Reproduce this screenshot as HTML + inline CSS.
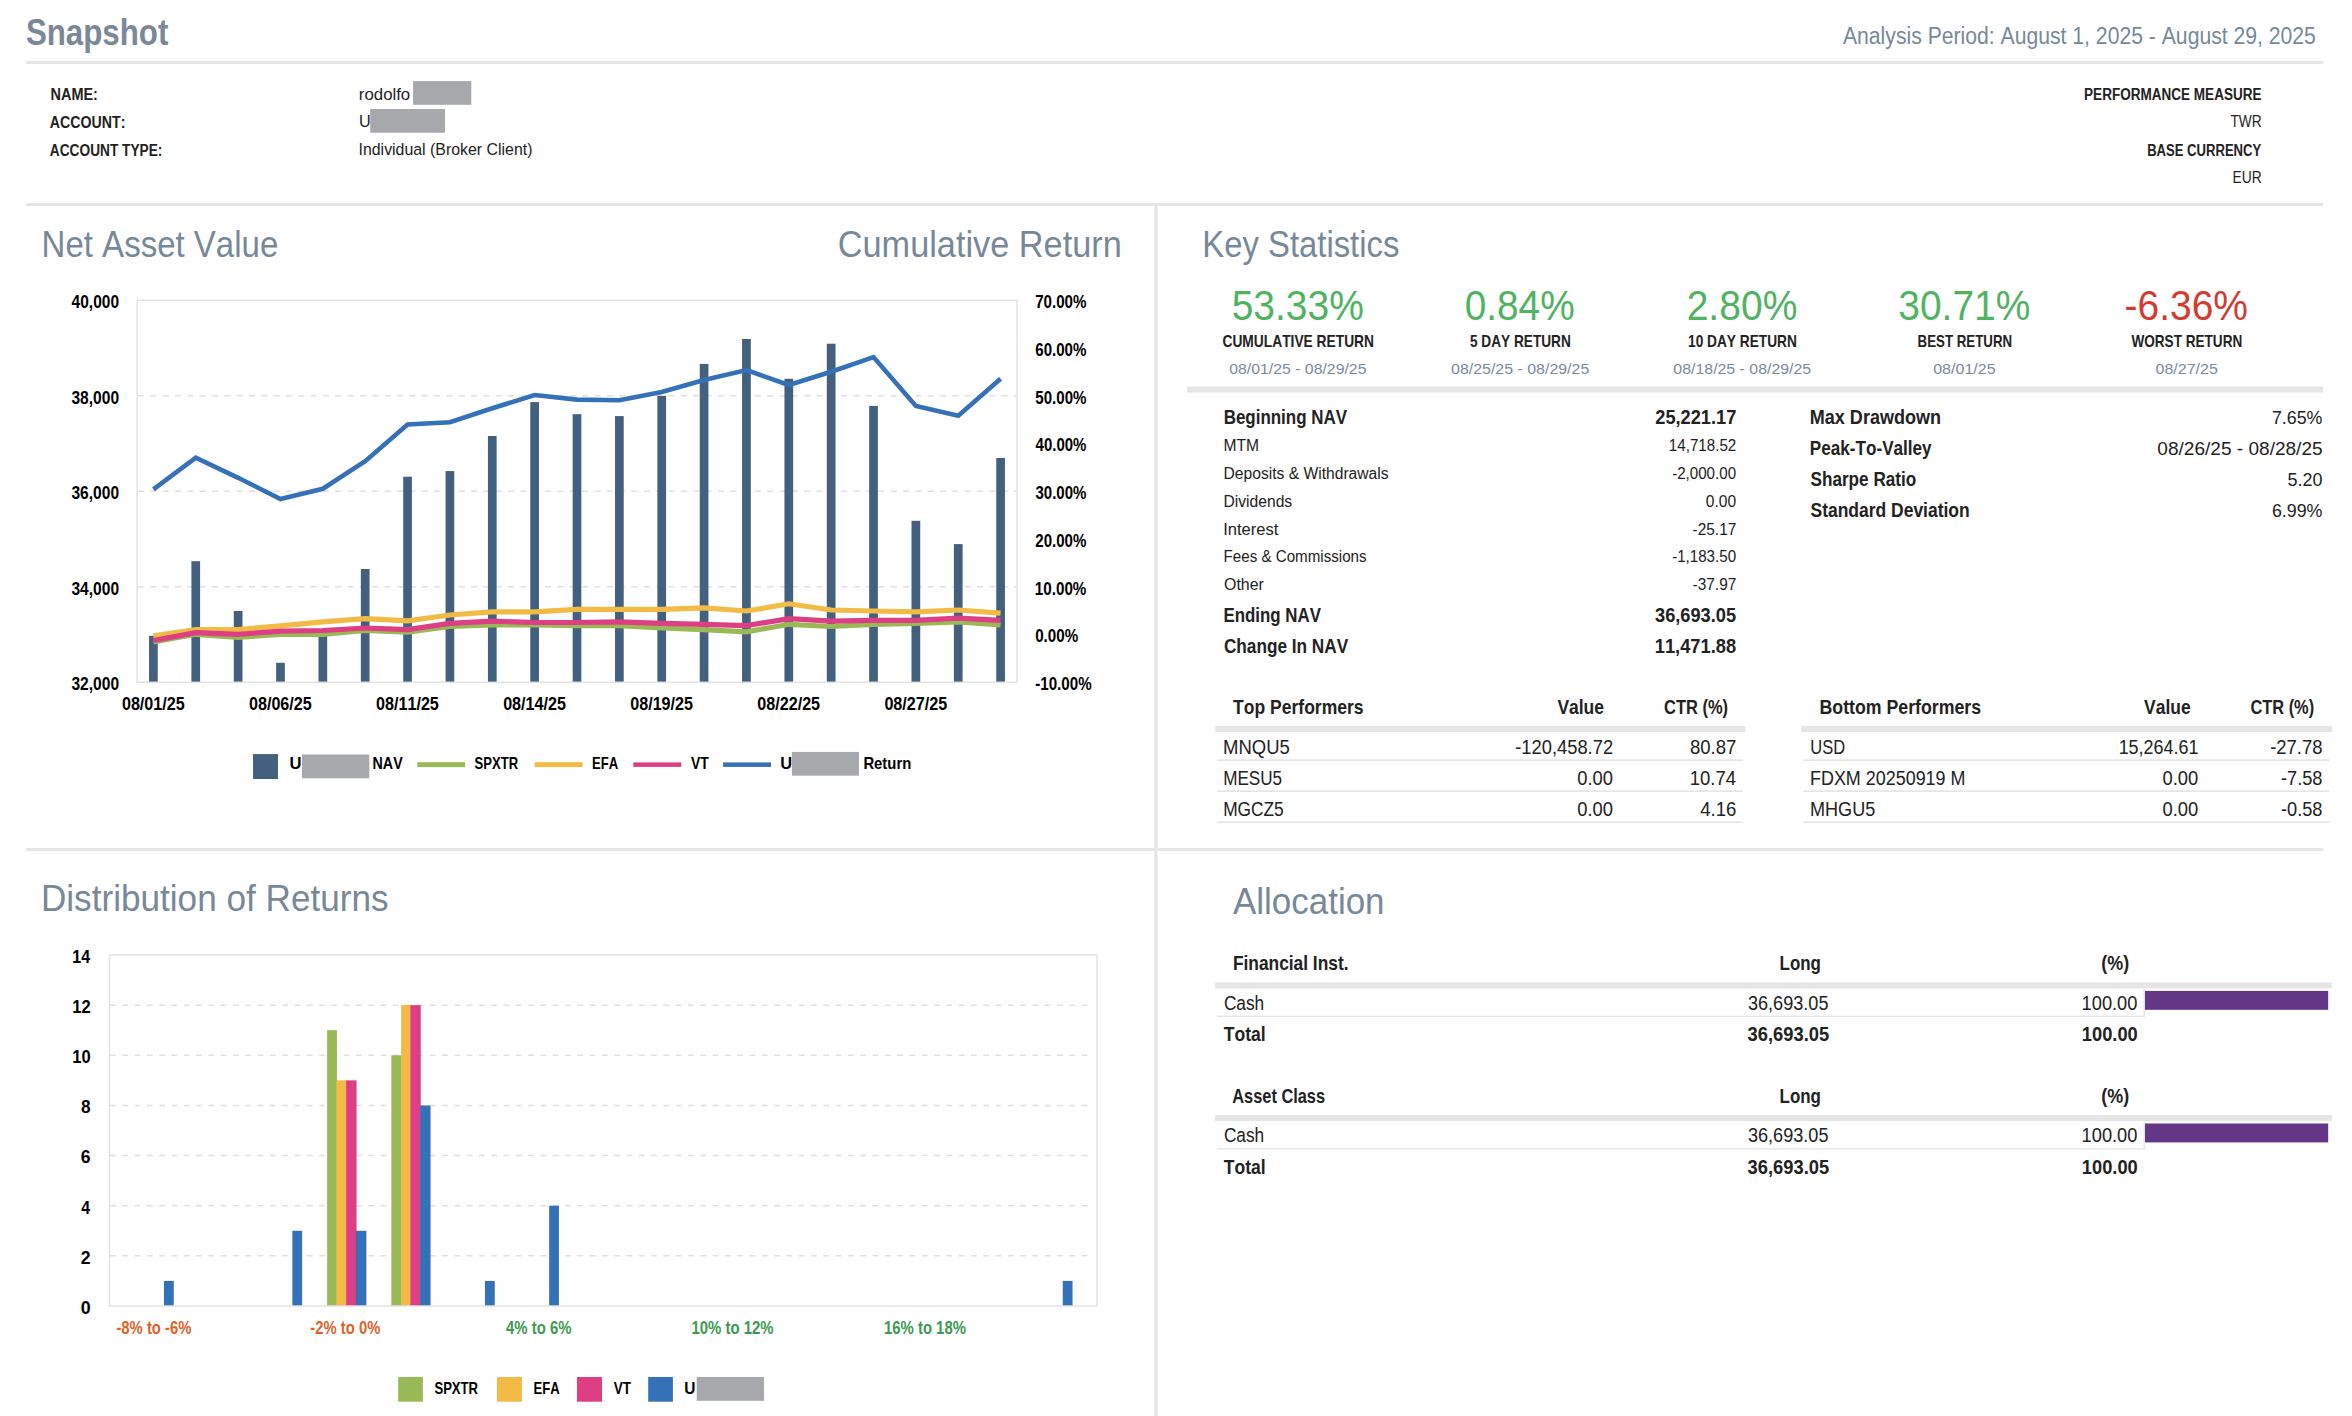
<!DOCTYPE html>
<html><head><meta charset="utf-8"><title>Snapshot</title>
<style>
html,body{margin:0;padding:0;background:#fff;width:2352px;height:1416px;overflow:hidden}
svg{display:block;font-family:"Liberation Sans",sans-serif;font-kerning:none;font-variant-ligatures:none}
</style></head><body>
<svg width="2352" height="1416" viewBox="0 0 2352 1416">
<rect x="0" y="0" width="2352" height="1416" fill="#ffffff"/>
<text x="25.90" y="44.60" font-size="37.00" font-weight="700" fill="#7a8899" textLength="142.48" lengthAdjust="spacingAndGlyphs">Snapshot</text>
<text x="1842.96" y="43.80" font-size="23.00" fill="#778899" textLength="472.93" lengthAdjust="spacingAndGlyphs">Analysis Period: August 1, 2025 - August 29, 2025</text>
<rect x="26.00" y="61.00" width="2297.00" height="3.00" fill="#e5e5e5"/>
<text x="50.53" y="100.00" font-size="17.40" font-weight="700" fill="#222222" textLength="47.36" lengthAdjust="spacingAndGlyphs">NAME:</text>
<text x="49.85" y="127.90" font-size="17.40" font-weight="700" fill="#222222" textLength="75.51" lengthAdjust="spacingAndGlyphs">ACCOUNT:</text>
<text x="49.86" y="155.50" font-size="17.40" font-weight="700" fill="#222222" textLength="112.46" lengthAdjust="spacingAndGlyphs">ACCOUNT TYPE:</text>
<text x="358.89" y="100.30" font-size="16.70" fill="#222222" textLength="51.32" lengthAdjust="spacingAndGlyphs">rodolfo</text>
<rect x="413.10" y="81.10" width="58.20" height="23.70" fill="#a7a8ab"/>
<text x="358.95" y="127.10" font-size="16.50" fill="#222222" textLength="11.70" lengthAdjust="spacingAndGlyphs">U</text>
<rect x="370.20" y="109.00" width="74.80" height="23.70" fill="#a7a8ab"/>
<text x="358.53" y="155.00" font-size="16.70" fill="#222222" textLength="173.95" lengthAdjust="spacingAndGlyphs">Individual (Broker Client)</text>
<text x="2084.09" y="100.00" font-size="17.40" font-weight="700" fill="#222222" textLength="177.43" lengthAdjust="spacingAndGlyphs">PERFORMANCE MEASURE</text>
<text x="2230.39" y="127.00" font-size="16.50" fill="#222222" textLength="31.24" lengthAdjust="spacingAndGlyphs">TWR</text>
<text x="2147.13" y="155.50" font-size="17.40" font-weight="700" fill="#222222" textLength="114.09" lengthAdjust="spacingAndGlyphs">BASE CURRENCY</text>
<text x="2232.47" y="183.30" font-size="16.50" fill="#222222" textLength="29.17" lengthAdjust="spacingAndGlyphs">EUR</text>
<rect x="26.00" y="203.00" width="2297.00" height="3.00" fill="#e5e5e5"/>
<rect x="1154.30" y="206.00" width="3.20" height="1210.00" fill="#e5e5e5"/>
<rect x="26.00" y="848.00" width="2297.00" height="3.00" fill="#e5e5e5"/>
<text x="41.59" y="257.00" font-size="36.30" fill="#778899" textLength="236.67" lengthAdjust="spacingAndGlyphs">Net Asset Value</text>
<text x="837.76" y="257.20" font-size="36.30" fill="#778899" textLength="283.97" lengthAdjust="spacingAndGlyphs">Cumulative Return</text>
<text x="1202.31" y="256.90" font-size="36.30" fill="#778899" textLength="197.08" lengthAdjust="spacingAndGlyphs">Key Statistics</text>
<text x="40.92" y="911.10" font-size="36.30" fill="#778899" textLength="347.65" lengthAdjust="spacingAndGlyphs">Distribution of Returns</text>
<text x="1233.03" y="914.00" font-size="36.30" fill="#778899" textLength="151.54" lengthAdjust="spacingAndGlyphs">Allocation</text>
<text x="1231.64" y="319.50" font-size="42.00" fill="#4fb362" textLength="132.15" lengthAdjust="spacingAndGlyphs">53.33%</text>
<text x="1464.68" y="319.50" font-size="42.00" fill="#4fb362" textLength="110.00" lengthAdjust="spacingAndGlyphs">0.84%</text>
<text x="1686.64" y="319.50" font-size="42.00" fill="#4fb362" textLength="110.76" lengthAdjust="spacingAndGlyphs">2.80%</text>
<text x="1898.32" y="319.50" font-size="42.00" fill="#4fb362" textLength="132.07" lengthAdjust="spacingAndGlyphs">30.71%</text>
<text x="2124.52" y="319.50" font-size="42.00" fill="#d33c33" textLength="123.42" lengthAdjust="spacingAndGlyphs">-6.36%</text>
<text x="1222.43" y="346.70" font-size="16.60" font-weight="700" fill="#222222" textLength="151.59" lengthAdjust="spacingAndGlyphs">CUMULATIVE RETURN</text>
<text x="1469.98" y="346.70" font-size="16.60" font-weight="700" fill="#222222" textLength="100.84" lengthAdjust="spacingAndGlyphs">5 DAY RETURN</text>
<text x="1688.04" y="346.70" font-size="16.60" font-weight="700" fill="#222222" textLength="108.89" lengthAdjust="spacingAndGlyphs">10 DAY RETURN</text>
<text x="1917.61" y="346.70" font-size="16.60" font-weight="700" fill="#222222" textLength="94.48" lengthAdjust="spacingAndGlyphs">BEST RETURN</text>
<text x="2131.39" y="346.70" font-size="16.60" font-weight="700" fill="#222222" textLength="110.93" lengthAdjust="spacingAndGlyphs">WORST RETURN</text>
<text x="1229.18" y="373.50" font-size="15.30" fill="#7a8a9e" textLength="137.28" lengthAdjust="spacingAndGlyphs">08/01/25 - 08/29/25</text>
<text x="1451.08" y="373.50" font-size="15.30" fill="#7a8a9e" textLength="138.19" lengthAdjust="spacingAndGlyphs">08/25/25 - 08/29/25</text>
<text x="1673.38" y="373.50" font-size="15.30" fill="#7a8a9e" textLength="137.79" lengthAdjust="spacingAndGlyphs">08/18/25 - 08/29/25</text>
<text x="1933.17" y="373.50" font-size="15.30" fill="#7a8a9e" textLength="62.50" lengthAdjust="spacingAndGlyphs">08/01/25</text>
<text x="2155.58" y="373.50" font-size="15.30" fill="#7a8a9e" textLength="62.20" lengthAdjust="spacingAndGlyphs">08/27/25</text>
<rect x="1187.00" y="386.50" width="1136.00" height="6.10" fill="#e5e5e5"/>
<text x="1223.67" y="424.00" font-size="20.50" font-weight="700" fill="#222222" textLength="123.35" lengthAdjust="spacingAndGlyphs">Beginning NAV</text>
<text x="1223.52" y="450.90" font-size="15.80" fill="#222222" textLength="35.56" lengthAdjust="spacingAndGlyphs">MTM</text>
<text x="1668.85" y="450.90" font-size="15.80" fill="#222222" textLength="67.42" lengthAdjust="spacingAndGlyphs">14,718.52</text>
<text x="1223.52" y="478.90" font-size="15.80" fill="#222222" textLength="165.05" lengthAdjust="spacingAndGlyphs">Deposits &amp; Withdrawals</text>
<text x="1672.13" y="478.90" font-size="15.80" fill="#222222" textLength="63.96" lengthAdjust="spacingAndGlyphs">-2,000.00</text>
<text x="1223.52" y="506.80" font-size="15.80" fill="#222222" textLength="68.65" lengthAdjust="spacingAndGlyphs">Dividends</text>
<text x="1705.79" y="506.80" font-size="15.80" fill="#222222" textLength="30.32" lengthAdjust="spacingAndGlyphs">0.00</text>
<text x="1223.28" y="534.60" font-size="15.80" fill="#222222" textLength="55.04" lengthAdjust="spacingAndGlyphs">Interest</text>
<text x="1692.62" y="534.60" font-size="15.80" fill="#222222" textLength="43.66" lengthAdjust="spacingAndGlyphs">-25.17</text>
<text x="1223.56" y="561.60" font-size="15.80" fill="#222222" textLength="142.99" lengthAdjust="spacingAndGlyphs">Fees &amp; Commissions</text>
<text x="1672.13" y="561.60" font-size="15.80" fill="#222222" textLength="63.96" lengthAdjust="spacingAndGlyphs">-1,183.50</text>
<text x="1224.05" y="589.90" font-size="15.80" fill="#222222" textLength="39.82" lengthAdjust="spacingAndGlyphs">Other</text>
<text x="1692.62" y="589.90" font-size="15.80" fill="#222222" textLength="43.66" lengthAdjust="spacingAndGlyphs">-37.97</text>
<text x="1655.27" y="424.00" font-size="20.50" font-weight="700" fill="#222222" textLength="81.03" lengthAdjust="spacingAndGlyphs">25,221.17</text>
<text x="1223.47" y="621.60" font-size="20.50" font-weight="700" fill="#222222" textLength="97.44" lengthAdjust="spacingAndGlyphs">Ending NAV</text>
<text x="1655.08" y="621.60" font-size="20.50" font-weight="700" fill="#222222" textLength="80.92" lengthAdjust="spacingAndGlyphs">36,693.05</text>
<text x="1223.89" y="652.50" font-size="20.50" font-weight="700" fill="#222222" textLength="124.32" lengthAdjust="spacingAndGlyphs">Change In NAV</text>
<text x="1654.75" y="652.50" font-size="20.50" font-weight="700" fill="#222222" textLength="81.31" lengthAdjust="spacingAndGlyphs">11,471.88</text>
<text x="1809.79" y="423.80" font-size="20.50" font-weight="700" fill="#222222" textLength="131.22" lengthAdjust="spacingAndGlyphs">Max Drawdown</text>
<text x="2271.89" y="423.80" font-size="19.00" fill="#222222" textLength="50.55" lengthAdjust="spacingAndGlyphs">7.65%</text>
<text x="1809.86" y="454.70" font-size="20.50" font-weight="700" fill="#222222" textLength="121.74" lengthAdjust="spacingAndGlyphs">Peak-To-Valley</text>
<text x="2157.36" y="454.70" font-size="19.00" fill="#222222" textLength="165.24" lengthAdjust="spacingAndGlyphs">08/26/25 - 08/28/25</text>
<text x="1810.51" y="485.60" font-size="20.50" font-weight="700" fill="#222222" textLength="105.76" lengthAdjust="spacingAndGlyphs">Sharpe Ratio</text>
<text x="2287.58" y="485.60" font-size="19.00" fill="#222222" textLength="34.92" lengthAdjust="spacingAndGlyphs">5.20</text>
<text x="1810.50" y="516.50" font-size="20.50" font-weight="700" fill="#222222" textLength="159.19" lengthAdjust="spacingAndGlyphs">Standard Deviation</text>
<text x="2271.89" y="516.50" font-size="19.00" fill="#222222" textLength="50.54" lengthAdjust="spacingAndGlyphs">6.99%</text>
<text x="1233.10" y="714.20" font-size="20.50" font-weight="700" fill="#222222" textLength="130.42" lengthAdjust="spacingAndGlyphs">Top Performers</text>
<text x="1557.38" y="714.00" font-size="20.50" font-weight="700" fill="#222222" textLength="46.62" lengthAdjust="spacingAndGlyphs">Value</text>
<text x="1664.02" y="714.00" font-size="20.50" font-weight="700" fill="#222222" textLength="63.99" lengthAdjust="spacingAndGlyphs">CTR (%)</text>
<rect x="1215.20" y="726.00" width="530.20" height="6.00" fill="#e5e5e5"/>
<text x="1223.08" y="754.10" font-size="19.30" fill="#222222" textLength="66.79" lengthAdjust="spacingAndGlyphs">MNQU5</text>
<text x="1515.18" y="754.10" font-size="19.30" fill="#222222" textLength="97.94" lengthAdjust="spacingAndGlyphs">-120,458.72</text>
<text x="1689.89" y="754.10" font-size="19.30" fill="#222222" textLength="46.54" lengthAdjust="spacingAndGlyphs">80.87</text>
<text x="1223.20" y="784.80" font-size="19.30" fill="#222222" textLength="58.92" lengthAdjust="spacingAndGlyphs">MESU5</text>
<text x="1577.18" y="784.80" font-size="19.30" fill="#222222" textLength="35.73" lengthAdjust="spacingAndGlyphs">0.00</text>
<text x="1689.79" y="784.80" font-size="19.30" fill="#222222" textLength="46.25" lengthAdjust="spacingAndGlyphs">10.74</text>
<text x="1223.18" y="816.00" font-size="19.30" fill="#222222" textLength="60.55" lengthAdjust="spacingAndGlyphs">MGCZ5</text>
<text x="1577.18" y="816.00" font-size="19.30" fill="#222222" textLength="35.73" lengthAdjust="spacingAndGlyphs">0.00</text>
<text x="1700.17" y="816.00" font-size="19.30" fill="#222222" textLength="36.14" lengthAdjust="spacingAndGlyphs">4.16</text>
<rect x="1217.00" y="759.30" width="526.00" height="1.80" fill="#e5e5e5"/>
<rect x="1217.00" y="790.30" width="526.00" height="1.80" fill="#e5e5e5"/>
<rect x="1217.00" y="821.30" width="526.00" height="1.80" fill="#e5e5e5"/>
<text x="1819.51" y="714.20" font-size="20.50" font-weight="700" fill="#222222" textLength="161.61" lengthAdjust="spacingAndGlyphs">Bottom Performers</text>
<text x="2144.08" y="714.00" font-size="20.50" font-weight="700" fill="#222222" textLength="46.52" lengthAdjust="spacingAndGlyphs">Value</text>
<text x="2250.53" y="714.00" font-size="20.50" font-weight="700" fill="#222222" textLength="63.59" lengthAdjust="spacingAndGlyphs">CTR (%)</text>
<rect x="1801.30" y="726.00" width="530.70" height="6.00" fill="#e5e5e5"/>
<text x="1810.23" y="754.10" font-size="19.30" fill="#222222" textLength="34.86" lengthAdjust="spacingAndGlyphs">USD</text>
<text x="2118.63" y="754.10" font-size="19.30" fill="#222222" textLength="79.74" lengthAdjust="spacingAndGlyphs">15,264.61</text>
<text x="2270.18" y="754.10" font-size="19.30" fill="#222222" textLength="52.32" lengthAdjust="spacingAndGlyphs">-27.78</text>
<text x="1810.03" y="784.80" font-size="19.30" fill="#222222" textLength="155.44" lengthAdjust="spacingAndGlyphs">FDXM 20250919 M</text>
<text x="2162.48" y="784.80" font-size="19.30" fill="#222222" textLength="35.73" lengthAdjust="spacingAndGlyphs">0.00</text>
<text x="2280.99" y="784.80" font-size="19.30" fill="#222222" textLength="41.50" lengthAdjust="spacingAndGlyphs">-7.58</text>
<text x="1810.02" y="816.00" font-size="19.30" fill="#222222" textLength="65.24" lengthAdjust="spacingAndGlyphs">MHGU5</text>
<text x="2162.48" y="816.00" font-size="19.30" fill="#222222" textLength="35.73" lengthAdjust="spacingAndGlyphs">0.00</text>
<text x="2280.99" y="816.00" font-size="19.30" fill="#222222" textLength="41.50" lengthAdjust="spacingAndGlyphs">-0.58</text>
<rect x="1803.30" y="759.30" width="526.30" height="1.80" fill="#e5e5e5"/>
<rect x="1803.30" y="790.30" width="526.30" height="1.80" fill="#e5e5e5"/>
<rect x="1803.30" y="821.30" width="526.30" height="1.80" fill="#e5e5e5"/>
<text x="1232.94" y="970.40" font-size="20.50" font-weight="700" fill="#222222" textLength="115.55" lengthAdjust="spacingAndGlyphs">Financial Inst.</text>
<text x="1779.57" y="970.40" font-size="20.50" font-weight="700" fill="#222222" textLength="41.36" lengthAdjust="spacingAndGlyphs">Long</text>
<text x="2101.31" y="970.40" font-size="20.50" font-weight="700" fill="#222222" textLength="27.89" lengthAdjust="spacingAndGlyphs">(%)</text>
<rect x="1215.00" y="982.50" width="1117.00" height="6.00" fill="#e5e5e5"/>
<text x="1223.92" y="1009.70" font-size="19.30" fill="#222222" textLength="40.30" lengthAdjust="spacingAndGlyphs">Cash</text>
<text x="1747.91" y="1009.60" font-size="19.30" fill="#222222" textLength="80.55" lengthAdjust="spacingAndGlyphs">36,693.05</text>
<text x="2081.61" y="1009.80" font-size="19.30" fill="#222222" textLength="55.80" lengthAdjust="spacingAndGlyphs">100.00</text>
<rect x="1217.00" y="1015.60" width="928.00" height="1.40" fill="#e5e5e5"/>
<rect x="2143.50" y="989.00" width="1.50" height="28.00" fill="#e6e6e6"/>
<rect x="2145.00" y="990.90" width="183.20" height="18.90" fill="#633686"/>
<text x="1223.70" y="1041.20" font-size="20.50" font-weight="700" fill="#222222" textLength="41.94" lengthAdjust="spacingAndGlyphs">Total</text>
<text x="1747.58" y="1041.20" font-size="20.50" font-weight="700" fill="#222222" textLength="81.53" lengthAdjust="spacingAndGlyphs">36,693.05</text>
<text x="2081.85" y="1041.20" font-size="20.50" font-weight="700" fill="#222222" textLength="55.90" lengthAdjust="spacingAndGlyphs">100.00</text>
<text x="1232.29" y="1103.00" font-size="20.50" font-weight="700" fill="#222222" textLength="92.78" lengthAdjust="spacingAndGlyphs">Asset Class</text>
<text x="1779.57" y="1103.00" font-size="20.50" font-weight="700" fill="#222222" textLength="41.36" lengthAdjust="spacingAndGlyphs">Long</text>
<text x="2101.31" y="1103.00" font-size="20.50" font-weight="700" fill="#222222" textLength="27.89" lengthAdjust="spacingAndGlyphs">(%)</text>
<rect x="1215.00" y="1115.10" width="1117.00" height="6.00" fill="#e5e5e5"/>
<text x="1223.92" y="1142.30" font-size="19.30" fill="#222222" textLength="40.30" lengthAdjust="spacingAndGlyphs">Cash</text>
<text x="1747.91" y="1142.20" font-size="19.30" fill="#222222" textLength="80.55" lengthAdjust="spacingAndGlyphs">36,693.05</text>
<text x="2081.61" y="1142.40" font-size="19.30" fill="#222222" textLength="55.80" lengthAdjust="spacingAndGlyphs">100.00</text>
<rect x="1217.00" y="1148.20" width="928.00" height="1.40" fill="#e5e5e5"/>
<rect x="2143.50" y="1121.60" width="1.50" height="28.00" fill="#e6e6e6"/>
<rect x="2145.00" y="1123.50" width="183.20" height="18.90" fill="#633686"/>
<text x="1223.70" y="1173.80" font-size="20.50" font-weight="700" fill="#222222" textLength="41.94" lengthAdjust="spacingAndGlyphs">Total</text>
<text x="1747.58" y="1173.80" font-size="20.50" font-weight="700" fill="#222222" textLength="81.53" lengthAdjust="spacingAndGlyphs">36,693.05</text>
<text x="2081.85" y="1173.80" font-size="20.50" font-weight="700" fill="#222222" textLength="55.90" lengthAdjust="spacingAndGlyphs">100.00</text>
<line x1="137.90" y1="395.80" x2="1016.00" y2="395.80" stroke="#e0e0e0" stroke-width="1.50" stroke-dasharray="6,6.34"/>
<line x1="137.90" y1="491.30" x2="1016.00" y2="491.30" stroke="#e0e0e0" stroke-width="1.50" stroke-dasharray="6,6.34"/>
<line x1="137.90" y1="586.80" x2="1016.00" y2="586.80" stroke="#e0e0e0" stroke-width="1.50" stroke-dasharray="6,6.34"/>
<text x="71.57" y="308.10" font-size="17.60" font-weight="700" fill="#000000" textLength="47.47" lengthAdjust="spacingAndGlyphs">40,000</text>
<text x="71.44" y="403.60" font-size="17.60" font-weight="700" fill="#000000" textLength="47.60" lengthAdjust="spacingAndGlyphs">38,000</text>
<text x="71.44" y="499.10" font-size="17.60" font-weight="700" fill="#000000" textLength="47.60" lengthAdjust="spacingAndGlyphs">36,000</text>
<text x="71.44" y="594.60" font-size="17.60" font-weight="700" fill="#000000" textLength="47.60" lengthAdjust="spacingAndGlyphs">34,000</text>
<text x="71.44" y="690.10" font-size="17.60" font-weight="700" fill="#000000" textLength="47.60" lengthAdjust="spacingAndGlyphs">32,000</text>
<text x="1035.15" y="308.10" font-size="17.60" font-weight="700" fill="#000000" textLength="51.25" lengthAdjust="spacingAndGlyphs">70.00%</text>
<text x="1035.25" y="355.85" font-size="17.60" font-weight="700" fill="#000000" textLength="51.15" lengthAdjust="spacingAndGlyphs">60.00%</text>
<text x="1035.34" y="403.60" font-size="17.60" font-weight="700" fill="#000000" textLength="51.06" lengthAdjust="spacingAndGlyphs">50.00%</text>
<text x="1035.57" y="451.35" font-size="17.60" font-weight="700" fill="#000000" textLength="50.82" lengthAdjust="spacingAndGlyphs">40.00%</text>
<text x="1035.46" y="499.10" font-size="17.60" font-weight="700" fill="#000000" textLength="50.94" lengthAdjust="spacingAndGlyphs">30.00%</text>
<text x="1035.28" y="546.85" font-size="17.60" font-weight="700" fill="#000000" textLength="51.12" lengthAdjust="spacingAndGlyphs">20.00%</text>
<text x="1034.84" y="594.60" font-size="17.60" font-weight="700" fill="#000000" textLength="51.56" lengthAdjust="spacingAndGlyphs">10.00%</text>
<text x="1035.20" y="642.35" font-size="17.60" font-weight="700" fill="#000000" textLength="43.00" lengthAdjust="spacingAndGlyphs">0.00%</text>
<text x="1035.21" y="690.10" font-size="17.60" font-weight="700" fill="#000000" textLength="56.39" lengthAdjust="spacingAndGlyphs">-10.00%</text>
<rect x="149.05" y="635.80" width="8.70" height="46.50" fill="#43607e"/>
<rect x="191.41" y="561.20" width="8.70" height="121.10" fill="#43607e"/>
<rect x="233.77" y="611.00" width="8.70" height="71.30" fill="#43607e"/>
<rect x="276.13" y="662.80" width="8.70" height="19.50" fill="#43607e"/>
<rect x="318.49" y="635.80" width="8.70" height="46.50" fill="#43607e"/>
<rect x="360.85" y="569.00" width="8.70" height="113.30" fill="#43607e"/>
<rect x="403.21" y="476.70" width="8.70" height="205.60" fill="#43607e"/>
<rect x="445.57" y="471.10" width="8.70" height="211.20" fill="#43607e"/>
<rect x="487.93" y="436.00" width="8.70" height="246.30" fill="#43607e"/>
<rect x="530.29" y="402.10" width="8.70" height="280.20" fill="#43607e"/>
<rect x="572.65" y="414.20" width="8.70" height="268.10" fill="#43607e"/>
<rect x="615.01" y="416.10" width="8.70" height="266.20" fill="#43607e"/>
<rect x="657.37" y="395.90" width="8.70" height="286.40" fill="#43607e"/>
<rect x="699.73" y="363.90" width="8.70" height="318.40" fill="#43607e"/>
<rect x="742.09" y="339.00" width="8.70" height="343.30" fill="#43607e"/>
<rect x="784.45" y="378.80" width="8.70" height="303.50" fill="#43607e"/>
<rect x="826.81" y="343.70" width="8.70" height="338.60" fill="#43607e"/>
<rect x="869.17" y="405.90" width="8.70" height="276.40" fill="#43607e"/>
<rect x="911.53" y="520.80" width="8.70" height="161.50" fill="#43607e"/>
<rect x="953.89" y="544.10" width="8.70" height="138.20" fill="#43607e"/>
<rect x="996.25" y="458.00" width="8.70" height="224.30" fill="#43607e"/>
<rect x="137.20" y="300.30" width="879.80" height="382.00" fill="none" stroke="#e3e3e3" stroke-width="1.5"/>
<text x="121.91" y="709.80" font-size="17.60" font-weight="700" fill="#000000" textLength="62.79" lengthAdjust="spacingAndGlyphs">08/01/25</text>
<text x="248.99" y="709.80" font-size="17.60" font-weight="700" fill="#000000" textLength="62.79" lengthAdjust="spacingAndGlyphs">08/06/25</text>
<text x="376.07" y="709.80" font-size="17.60" font-weight="700" fill="#000000" textLength="62.79" lengthAdjust="spacingAndGlyphs">08/11/25</text>
<text x="503.15" y="709.80" font-size="17.60" font-weight="700" fill="#000000" textLength="62.79" lengthAdjust="spacingAndGlyphs">08/14/25</text>
<text x="630.23" y="709.80" font-size="17.60" font-weight="700" fill="#000000" textLength="62.79" lengthAdjust="spacingAndGlyphs">08/19/25</text>
<text x="757.31" y="709.80" font-size="17.60" font-weight="700" fill="#000000" textLength="62.79" lengthAdjust="spacingAndGlyphs">08/22/25</text>
<text x="884.39" y="709.80" font-size="17.60" font-weight="700" fill="#000000" textLength="62.79" lengthAdjust="spacingAndGlyphs">08/27/25</text>
<polyline points="153.40,642.00 195.76,634.30 238.12,637.40 280.48,634.30 322.84,634.30 365.20,630.50 407.56,632.10 449.92,626.50 492.28,625.00 534.64,625.00 577.00,625.60 619.36,625.60 661.72,628.00 704.08,629.60 746.44,631.80 788.80,624.30 831.16,626.50 873.52,624.30 915.88,623.40 958.24,621.80 1000.60,625.00" fill="none" stroke="#98b955" stroke-width="5.20" stroke-linejoin="miter" stroke-miterlimit="4" stroke-linecap="butt"/>
<polyline points="153.40,635.80 195.76,629.60 238.12,629.60 280.48,625.90 322.84,621.80 365.20,618.70 407.56,620.90 449.92,615.00 492.28,611.90 534.64,611.90 577.00,609.40 619.36,609.40 661.72,609.40 704.08,607.80 746.44,611.00 788.80,603.80 831.16,610.00 873.52,611.00 915.88,611.90 958.24,610.00 1000.60,613.10" fill="none" stroke="#f2bb45" stroke-width="5.20" stroke-linejoin="miter" stroke-miterlimit="4" stroke-linecap="butt"/>
<polyline points="153.40,640.50 195.76,632.70 238.12,634.30 280.48,631.20 322.84,630.50 365.20,628.00 407.56,629.60 449.92,623.40 492.28,621.20 534.64,622.50 577.00,622.50 619.36,621.80 661.72,623.40 704.08,624.30 746.44,625.60 788.80,618.70 831.16,621.20 873.52,620.30 915.88,620.30 958.24,618.10 1000.60,620.30" fill="none" stroke="#dd3e84" stroke-width="5.20" stroke-linejoin="miter" stroke-miterlimit="4" stroke-linecap="butt"/>
<polyline points="153.40,489.30 195.76,457.70 238.12,477.80 280.48,499.10 322.84,488.80 365.20,461.20 407.56,424.50 449.92,422.30 492.28,408.30 534.64,395.00 577.00,399.60 619.36,400.30 661.72,391.90 704.08,380.00 746.44,370.10 788.80,385.00 831.16,371.70 873.52,357.10 915.88,405.90 958.24,415.80 1000.60,378.80" fill="none" stroke="#3571b9" stroke-width="4.60" stroke-linejoin="miter" stroke-miterlimit="4" stroke-linecap="butt"/>
<rect x="253.00" y="754.10" width="25.00" height="24.90" fill="#43607e"/>
<text x="289.50" y="769.40" font-size="16.60" font-weight="700" fill="#000000" textLength="12.01" lengthAdjust="spacingAndGlyphs">U</text>
<rect x="302.00" y="754.50" width="67.30" height="23.80" fill="#a7a8ab"/>
<text x="372.54" y="769.40" font-size="16.60" font-weight="700" fill="#000000" textLength="30.15" lengthAdjust="spacingAndGlyphs">NAV</text>
<rect x="417.30" y="762.20" width="47.70" height="4.90" fill="#98b955"/>
<text x="474.62" y="769.40" font-size="16.60" font-weight="700" fill="#000000" textLength="43.44" lengthAdjust="spacingAndGlyphs">SPXTR</text>
<rect x="534.70" y="762.20" width="47.90" height="4.90" fill="#f2bb45"/>
<text x="592.12" y="769.40" font-size="16.60" font-weight="700" fill="#000000" textLength="26.22" lengthAdjust="spacingAndGlyphs">EFA</text>
<rect x="633.30" y="762.40" width="48.00" height="4.50" fill="#dd3e84"/>
<text x="690.90" y="769.40" font-size="16.60" font-weight="700" fill="#000000" textLength="17.85" lengthAdjust="spacingAndGlyphs">VT</text>
<rect x="723.10" y="762.40" width="47.90" height="4.50" fill="#3571b9"/>
<text x="780.31" y="769.40" font-size="16.60" font-weight="700" fill="#000000" textLength="11.89" lengthAdjust="spacingAndGlyphs">U</text>
<rect x="792.00" y="751.90" width="66.90" height="23.80" fill="#a7a8ab"/>
<text x="863.41" y="769.40" font-size="16.60" font-weight="700" fill="#000000" textLength="47.81" lengthAdjust="spacingAndGlyphs">Return</text>
<line x1="110.00" y1="1255.86" x2="1093.00" y2="1255.86" stroke="#e0e0e0" stroke-width="1.50" stroke-dasharray="5.7,6.6"/>
<line x1="110.00" y1="1205.71" x2="1093.00" y2="1205.71" stroke="#e0e0e0" stroke-width="1.50" stroke-dasharray="5.7,6.6"/>
<line x1="110.00" y1="1155.57" x2="1093.00" y2="1155.57" stroke="#e0e0e0" stroke-width="1.50" stroke-dasharray="5.7,6.6"/>
<line x1="110.00" y1="1105.43" x2="1093.00" y2="1105.43" stroke="#e0e0e0" stroke-width="1.50" stroke-dasharray="5.7,6.6"/>
<line x1="110.00" y1="1055.29" x2="1093.00" y2="1055.29" stroke="#e0e0e0" stroke-width="1.50" stroke-dasharray="5.7,6.6"/>
<line x1="110.00" y1="1005.14" x2="1093.00" y2="1005.14" stroke="#e0e0e0" stroke-width="1.50" stroke-dasharray="5.7,6.6"/>
<text x="80.79" y="1313.80" font-size="17.60" font-weight="700" fill="#000000" textLength="9.94" lengthAdjust="spacingAndGlyphs">0</text>
<text x="80.89" y="1263.66" font-size="17.60" font-weight="700" fill="#000000" textLength="9.82" lengthAdjust="spacingAndGlyphs">2</text>
<text x="81.26" y="1213.51" font-size="17.60" font-weight="700" fill="#000000" textLength="8.83" lengthAdjust="spacingAndGlyphs">4</text>
<text x="80.86" y="1163.37" font-size="17.60" font-weight="700" fill="#000000" textLength="9.78" lengthAdjust="spacingAndGlyphs">6</text>
<text x="80.95" y="1113.23" font-size="17.60" font-weight="700" fill="#000000" textLength="9.58" lengthAdjust="spacingAndGlyphs">8</text>
<text x="72.26" y="1063.09" font-size="17.60" font-weight="700" fill="#000000" textLength="18.42" lengthAdjust="spacingAndGlyphs">10</text>
<text x="72.26" y="1012.94" font-size="17.60" font-weight="700" fill="#000000" textLength="18.40" lengthAdjust="spacingAndGlyphs">12</text>
<text x="72.29" y="962.80" font-size="17.60" font-weight="700" fill="#000000" textLength="17.79" lengthAdjust="spacingAndGlyphs">14</text>
<rect x="163.95" y="1280.93" width="9.80" height="25.07" fill="#3571b9"/>
<rect x="292.35" y="1230.79" width="9.80" height="75.21" fill="#3571b9"/>
<rect x="327.15" y="1030.21" width="9.80" height="275.79" fill="#98b955"/>
<rect x="336.35" y="1080.36" width="11.00" height="225.64" fill="#f2bb45"/>
<rect x="346.15" y="1080.36" width="10.40" height="225.64" fill="#dd3e84"/>
<rect x="355.95" y="1230.79" width="10.40" height="75.21" fill="#3571b9"/>
<rect x="391.35" y="1055.29" width="10.40" height="250.71" fill="#98b955"/>
<rect x="401.15" y="1005.14" width="10.40" height="300.86" fill="#f2bb45"/>
<rect x="410.35" y="1005.14" width="10.40" height="300.86" fill="#dd3e84"/>
<rect x="420.15" y="1105.43" width="10.40" height="200.57" fill="#3571b9"/>
<rect x="484.95" y="1280.93" width="9.80" height="25.07" fill="#3571b9"/>
<rect x="549.15" y="1205.71" width="9.80" height="100.29" fill="#3571b9"/>
<rect x="1062.75" y="1280.93" width="9.80" height="25.07" fill="#3571b9"/>
<rect x="109.50" y="955.00" width="987.50" height="351.00" fill="none" stroke="#e3e3e3" stroke-width="1.5"/>
<text x="116.42" y="1333.50" font-size="17.60" font-weight="700" fill="#e0622b" textLength="74.97" lengthAdjust="spacingAndGlyphs">-8% to -6%</text>
<text x="310.37" y="1333.50" font-size="17.60" font-weight="700" fill="#e0622b" textLength="70.07" lengthAdjust="spacingAndGlyphs">-2% to 0%</text>
<text x="506.07" y="1333.50" font-size="17.60" font-weight="700" fill="#3e9a4f" textLength="65.42" lengthAdjust="spacingAndGlyphs">4% to 6%</text>
<text x="691.46" y="1333.50" font-size="17.60" font-weight="700" fill="#3e9a4f" textLength="82.03" lengthAdjust="spacingAndGlyphs">10% to 12%</text>
<text x="884.06" y="1333.50" font-size="17.60" font-weight="700" fill="#3e9a4f" textLength="81.83" lengthAdjust="spacingAndGlyphs">16% to 18%</text>
<rect x="398.20" y="1377.00" width="24.70" height="24.70" fill="#98b955"/>
<text x="434.42" y="1393.70" font-size="16.60" font-weight="700" fill="#000000" textLength="43.65" lengthAdjust="spacingAndGlyphs">SPXTR</text>
<rect x="497.00" y="1377.00" width="25.00" height="24.70" fill="#f2bb45"/>
<text x="533.52" y="1393.70" font-size="16.60" font-weight="700" fill="#000000" textLength="26.22" lengthAdjust="spacingAndGlyphs">EFA</text>
<rect x="577.00" y="1377.00" width="25.00" height="24.70" fill="#dd3e84"/>
<text x="613.71" y="1393.70" font-size="16.60" font-weight="700" fill="#000000" textLength="17.34" lengthAdjust="spacingAndGlyphs">VT</text>
<rect x="648.20" y="1377.00" width="24.70" height="24.70" fill="#3571b9"/>
<text x="684.37" y="1393.70" font-size="16.60" font-weight="700" fill="#000000" textLength="11.17" lengthAdjust="spacingAndGlyphs">U</text>
<rect x="696.70" y="1377.00" width="67.30" height="23.80" fill="#a7a8ab"/>
</svg>
</body></html>
